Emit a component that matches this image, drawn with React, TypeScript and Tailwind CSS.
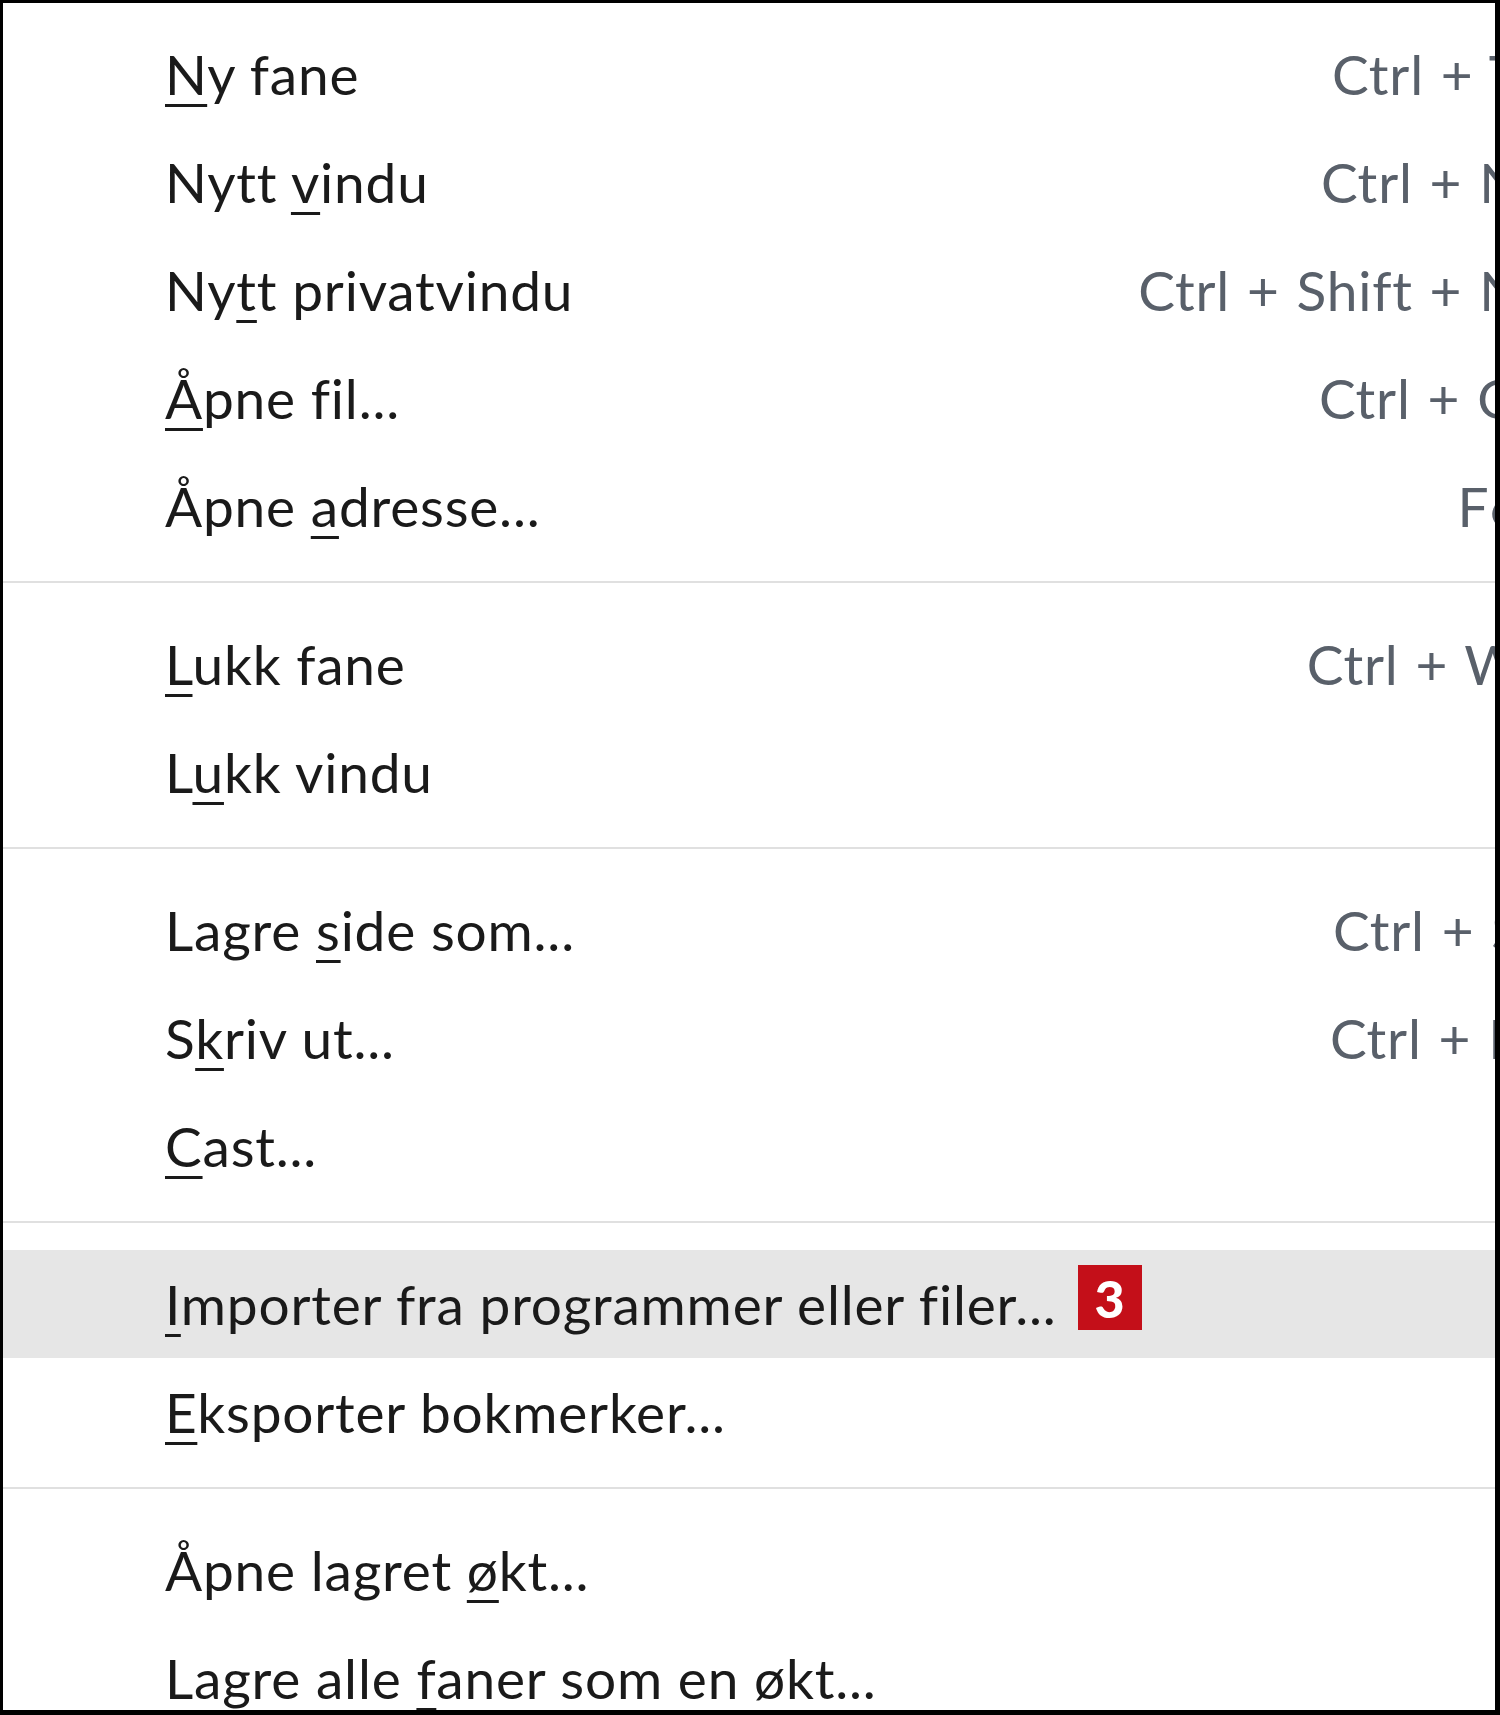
type MenuItem = {
  label: string;
  mnemonic: number;
  shortcut?: string;
  badge?: string;
  active?: boolean;
};

type MenuEntry = MenuItem | "separator";

const ENTRIES: MenuEntry[] = [
  { label: "Ny fane", mnemonic: 0, shortcut: "Ctrl + T" },
  { label: "Nytt vindu", mnemonic: 5, shortcut: "Ctrl + N" },
  { label: "Nytt privatvindu", mnemonic: 2, shortcut: "Ctrl + Shift + N" },
  { label: "Åpne fil...", mnemonic: 0, shortcut: "Ctrl + O" },
  { label: "Åpne adresse...", mnemonic: 5, shortcut: "F6" },
  "separator",
  { label: "Lukk fane", mnemonic: 0, shortcut: "Ctrl + W" },
  { label: "Lukk vindu", mnemonic: 1 },
  "separator",
  { label: "Lagre side som...", mnemonic: 6, shortcut: "Ctrl + S" },
  { label: "Skriv ut...", mnemonic: 1, shortcut: "Ctrl + P" },
  { label: "Cast...", mnemonic: 0 },
  "separator",
  {
    label: "Importer fra programmer eller filer...",
    mnemonic: 0,
    badge: "3",
    active: true,
  },
  { label: "Eksporter bokmerker...", mnemonic: 0 },
  "separator",
  { label: "Åpne lagret økt...", mnemonic: 12 },
  { label: "Lagre alle faner som en økt...", mnemonic: 11 },
];

function Label({ text, mnemonic }: { text: string; mnemonic: number }) {
  return (
    <span className="whitespace-pre">
      {text.slice(0, mnemonic)}
      <span className="underline decoration-[3px] underline-offset-[9px]">
        {text.charAt(mnemonic)}
      </span>
      {text.slice(mnemonic + 1)}
    </span>
  );
}

function Row({ item }: { item: MenuItem }) {
  return (
    <div
      className={`flex h-[108px] items-center pl-[162px] leading-[108px] ${
        item.active ? "bg-[#e6e6e6]" : ""
      }`}
    >
      <span className="text-[#1a1a1a]">
        <Label text={item.label} mnemonic={item.mnemonic} />
      </span>
      {item.badge ? (
        <span className="mb-[13px] ml-[21px] flex h-[65px] w-[64px] items-center justify-center bg-[#c40f19] text-[52px] leading-none font-black tracking-normal text-white">
          {item.badge}
        </span>
      ) : null}
      {item.shortcut ? (
        <span className="ml-auto whitespace-pre text-[#59606a] [word-spacing:2px]">
          {item.shortcut}
        </span>
      ) : null}
    </div>
  );
}

export default function App() {
  return (
    <div className="h-[1715px] w-[1500px] overflow-hidden border-t-[3px] border-r-[5px] border-b-[5px] border-l-[3px] border-black bg-white font-[Lato,'Noto_Sans',sans-serif] text-[55px] tracking-[0.8px] [font-variant-ligatures:none]">
      <div className="w-[1519px] pt-[17px]">
        {ENTRIES.map((entry, index) =>
          entry === "separator" ? (
            <div key={`sep-${index}`} className="pt-[21px] pb-[27px]">
              <div className="h-[2px] bg-[#e0e0e0]" />
            </div>
          ) : (
            <Row key={entry.label} item={entry} />
          )
        )}
      </div>
    </div>
  );
}
